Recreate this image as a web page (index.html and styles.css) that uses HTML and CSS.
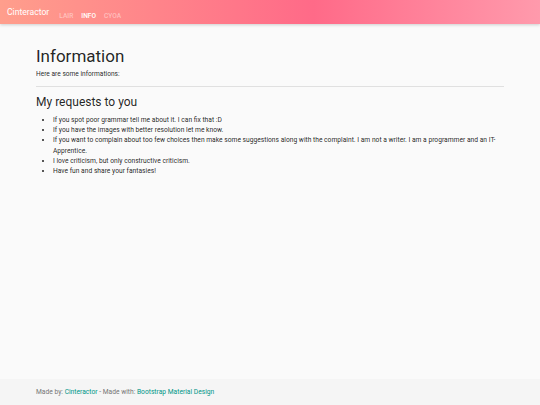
FILE: index.html
```html
<!DOCTYPE html>
<html>
<head>
<meta charset="utf-8">
<link rel="stylesheet" href="styles.css">
</head>
<body>
<nav class="navbar">
  <a class="brand">Cinteractor</a>
  <ul class="nav">
    <li><a class="nav-link">Lair</a></li>
    <li><a class="nav-link active">Info</a></li>
    <li><a class="nav-link">CYOA</a></li>
  </ul>
</nav>
<main class="content">
  <h1 class="title">Information</h1>
  <p class="lead">Here are some informations:</p>
  <hr class="rule">
  <h2 class="subtitle">My requests to you</h2>
  <ul class="requests">
    <li>If you spot poor grammar tell me about it. I can fix that :D</li>
    <li>If you have the images with better resolution let me know.</li>
    <li>If you want to complain about too few choices then make some suggestions along with the complaint. I am not a writer. I am a programmer and an IT-Apprentice.</li>
    <li>I love criticism, but only constructive criticism.</li>
    <li>Have fun and share your fantasies!</li>
  </ul>
</main>
<footer class="footer">
  <span class="footer-text">Made by: <a class="link">Cinteractor</a> - Made with: <a class="link">Bootstrap Material Design</a></span>
</footer>
</body>
</html>
```
FILE: styles.css
```css
html, body {
  margin: 0;
  padding: 0;
  height: 100%;
}
body {
  background: #fafafa;
  font-family: Roboto, "Noto Sans", sans-serif;
  color: rgba(0,0,0,0.87);
  display: flex;
  flex-direction: column;
}
.navbar {
  height: 24px;
  display: flex;
  align-items: center;
  padding: 0 7px;
  background: linear-gradient(90deg, #ff9e8c 0%, #ff6a88 58%, #ff9aac 100%);
  box-shadow: 0 1px 3px rgba(0,0,0,0.18);
  flex: none;
  position: relative;
  z-index: 1;
}
.brand {
  color: #fff;
  font-size: 8.6px;
  margin-right: 10px;
}
.nav {
  list-style: none;
  margin: 0;
  padding: 0;
  display: flex;
  gap: 8px;
}
.nav-link {
  font-size: 6.6px;
  font-weight: 500;
  text-transform: uppercase;
  color: rgba(255,255,255,0.45);
}
.nav-link.active {
  color: #fff;
}
.content {
  flex: 1;
  padding: 22px 36px 0;
}
.title {
  font-size: 17px;
  font-weight: 400;
  margin: 0;
  line-height: 20px;
}
.lead {
  font-size: 6.6px;
  margin: 3px 0 0;
  line-height: 10px;
}
.rule {
  border: 0;
  border-top: 1px solid rgba(0,0,0,0.1);
  margin: 7px 0 8px;
}
.subtitle {
  font-size: 12px;
  font-weight: 400;
  margin: 0;
  line-height: 14px;
}
.requests {
  margin: 6px 0 0;
  padding-left: 17px;
  font-size: 6.7px;
  line-height: 10.2px;
}
.footer {
  flex: none;
  height: 26px;
  background: #f5f5f5;
  padding: 0 36px;
  display: flex;
  align-items: center;
  font-size: 6.7px;
  color: #757575;
}
.link {
  color: #009688;
}
```
